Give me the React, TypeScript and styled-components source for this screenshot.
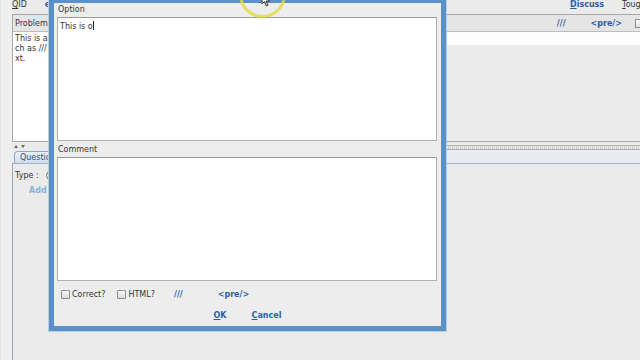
import styled, { createGlobalStyle } from "styled-components";

const GlobalStyle = createGlobalStyle`
  html, body {
    margin: 0;
    padding: 0;
    background: #ebebeb;
  }
  body {
    font-family: "DejaVu Sans", "Liberation Sans", sans-serif;
    font-size: 8px;
    color: #363636;
  }
`;

const Screen = styled.div`
  position: relative;
  width: 640px;
  height: 360px;
  overflow: hidden;
  background: #efefef;
  display: flex;
`;

const LeftGutter = styled.div`
  width: 12px;
  flex-shrink: 0;
  border-left: 1px solid #e2e2e2;
  box-sizing: border-box;
`;

const MainArea = styled.div`
  flex: 1;
  display: flex;
  flex-direction: column;
  background: #ebebeb;
  min-width: 0;
`;

const TopBar = styled.div`
  height: 14px;
  display: flex;
  align-items: flex-start;
  line-height: 9px;
`;

const TopLabel = styled.span<{ $ml?: number }>`
  margin-left: ${(p) => p.$ml ?? 0}px;
  color: #363636;
  white-space: nowrap;
`;

const TopLink = styled.span<{ $ml?: number }>`
  margin-left: ${(p) => p.$ml ?? 0}px;
  color: #2d5fa6;
  font-weight: bold;
  white-space: nowrap;
`;

const TopRight = styled.div`
  margin-left: auto;
  width: 70px;
  display: flex;
  overflow: hidden;
`;

const Mnemonic = styled.span`
  text-decoration: underline;
`;

const Spacer = styled.div`
  flex: 1;
`;

const ProblemPanel = styled.div`
  height: 128px;
  margin-right: -4px;
  box-sizing: border-box;
  border: 1px solid #a8a8a8;
  border-right: none;
  display: flex;
  flex-direction: column;
`;

const PanelHeader = styled.div`
  height: 17px;
  box-sizing: border-box;
  background: #e5e5e5;
  border-bottom: 1px solid #bdbdbd;
  display: flex;
  align-items: center;
  padding-left: 2px;
  white-space: nowrap;
`;

const HeaderTitle = styled.span`
  color: #363636;
`;

const HeaderCheck = styled.span`
  display: inline-block;
  width: 7px;
  height: 7px;
  margin-left: 13px;
  border: 1px solid #8e8e8e;
  background: linear-gradient(#fbfbfb, #dedede);
  flex-shrink: 0;
`;

const PanelBody = styled.div`
  flex: 1;
  display: flex;
`;

const SourceText = styled.div`
  width: 300px;
  background: #ffffff;
  padding: 2px 2px 0;
  line-height: 10px;
  color: #333;
`;

const PreviewSide = styled.div`
  flex: 1;
  display: flex;
  flex-direction: column;
`;

const PreviewStrip = styled.div`
  height: 13px;
  background: #fdfdfd;
`;

const Splitter = styled.div`
  height: 8px;
  display: flex;
  align-items: center;
  gap: 3px;
  padding-left: 2px;
`;

const SplitArrow = styled.span<{ $down?: boolean }>`
  width: 0;
  height: 0;
  border-left: 2px solid transparent;
  border-right: 2px solid transparent;
  ${(p) =>
    p.$down
      ? "border-top: 3px solid #666;"
      : "border-bottom: 3px solid #666;"}
`;

const SplitGrip = styled.div`
  flex: 1;
  height: 3px;
  margin-left: 20px;
  margin-top: 2px;
  border-top: 1px solid #b4b4b4;
  border-bottom: 1px solid #a9a9a9;
  background: repeating-linear-gradient(90deg, #cfcfcf 0 1px, #ececec 1px 2px);
`;

const TabStrip = styled.div`
  height: 13px;
  display: flex;
  align-items: flex-end;
  padding-left: 2px;
  background: #e9ecf0;
`;

const Tab = styled.div`
  height: 12px;
  box-sizing: border-box;
  padding: 0 5px;
  line-height: 11px;
  border: 1px solid #8fa8c8;
  border-bottom: none;
  border-radius: 4px 0 0 0;
  background: linear-gradient(#eef3fa, #cddcef);
  color: #33506f;
`;

const TabContent = styled.div`
  flex: 1;
  border-top: 1px solid #9fb1c8;
  border-left: 1px solid #9aa6b4;
  padding: 4px 2px;
`;

const TypeRow = styled.div`
  height: 14px;
  display: flex;
  align-items: center;
  gap: 7px;
`;

const Radio = styled.span`
  width: 7px;
  height: 7px;
  border-radius: 50%;
  border: 1px solid #6a6a6a;
  background: radial-gradient(circle, #222 0 1.6px, #f5f5f5 2px);
`;

const AddLink = styled.div`
  margin-top: 4px;
  padding-left: 14px;
  color: #8cb0d8;
  font-weight: bold;
`;

const Dialog = styled.div`
  position: absolute;
  left: 49px;
  top: -2px;
  width: 397px;
  height: 333px;
  box-sizing: border-box;
  border: 5px solid #5c90c8;
  box-shadow: 0 0 0 1px #b9cde3;
  background: #ededed;
  display: flex;
  flex-direction: column;
`;

const DialogLabel = styled.div<{ $h: number; $lh: number }>`
  height: ${(p) => p.$h}px;
  line-height: ${(p) => p.$lh}px;
  padding-left: 4px;
  color: #363636;
`;

const TextBox = styled.div`
  height: 124px;
  box-sizing: border-box;
  margin: 1px 4px 0 3px;
  background: #ffffff;
  border: 1px solid #b0b0b0;
  border-top-color: #9a9a9a;
  padding: 3px 2px;
  line-height: 10px;
  color: #333;
`;

const Caret = styled.span`
  display: inline-block;
  width: 1px;
  height: 9px;
  background: #222;
  vertical-align: -1px;
`;

const OptionsRow = styled.div`
  margin-top: 5px;
  height: 16px;
  display: flex;
  align-items: center;
  padding-left: 7px;
  white-space: nowrap;
`;

const CheckItem = styled.label<{ $ml?: number }>`
  display: flex;
  align-items: center;
  gap: 2px;
  margin-left: ${(p) => p.$ml ?? 0}px;
  color: #363636;
`;

const CheckBox = styled.span`
  width: 7px;
  height: 7px;
  border: 1px solid #8e8e8e;
  border-radius: 1px;
  background: linear-gradient(#fbfbfb, #d9d9d9);
`;

const ToolLink = styled.span<{ $ml?: number }>`
  margin-left: ${(p) => p.$ml ?? 0}px;
  color: #2d5fa6;
  font-weight: bold;
`;

const ButtonRow = styled.div`
  margin-top: 6px;
  height: 14px;
  display: flex;
  align-items: center;
  justify-content: center;
  gap: 25px;
`;

const LinkButton = styled.span`
  color: #2d5fa6;
  font-weight: bold;
`;

const Highlight = styled.div`
  position: absolute;
  left: 239px;
  top: -29px;
  width: 41px;
  height: 41px;
  border-radius: 50%;
  border: 3px solid rgba(228, 218, 58, 0.8);
  pointer-events: none;
`;

const Pointer = styled.svg`
  position: absolute;
  left: 261px;
  top: -7px;
`;

export default function App() {
  return (
    <>
      <GlobalStyle />
      <Screen>
        <LeftGutter />
        <MainArea>
          <TopBar>
            <TopLabel>
              <Mnemonic>Q</Mnemonic>ID
            </TopLabel>
            <TopLink $ml={18}>eID</TopLink>
            <TopRight>
              <TopLink>
                <Mnemonic>D</Mnemonic>iscuss
              </TopLink>
              <TopLabel $ml={18}>
                <Mnemonic>T</Mnemonic>ough
              </TopLabel>
            </TopRight>
          </TopBar>

          <ProblemPanel>
            <PanelHeader>
              <HeaderTitle>Problem Statement</HeaderTitle>
              <Spacer />
              <ToolLink>///</ToolLink>
              <ToolLink $ml={25}>&lt;pre/&gt;</ToolLink>
              <HeaderCheck />
            </PanelHeader>
            <PanelBody>
              <SourceText>
                This is a
                <br />
                ch as ///
                <br />
                xt.
              </SourceText>
              <PreviewSide>
                <PreviewStrip />
              </PreviewSide>
            </PanelBody>
          </ProblemPanel>

          <Splitter>
            <SplitArrow />
            <SplitArrow $down />
            <SplitGrip />
          </Splitter>

          <TabStrip>
            <Tab>Question</Tab>
          </TabStrip>
          <TabContent>
            <TypeRow>
              <span>Type :</span>
              <Radio />
            </TypeRow>
            <AddLink>Add Option</AddLink>
          </TabContent>
        </MainArea>

        <Dialog>
          <DialogLabel $h={13} $lh={14}>
            Option
          </DialogLabel>
          <TextBox>
            This is o<Caret />
          </TextBox>
          <DialogLabel $h={15} $lh={17}>
            Comment
          </DialogLabel>
          <TextBox />
          <OptionsRow>
            <CheckItem>
              <CheckBox />
              Correct?
            </CheckItem>
            <CheckItem $ml={12}>
              <CheckBox />
              HTML?
            </CheckItem>
            <ToolLink $ml={19}>///</ToolLink>
            <ToolLink $ml={35}>&lt;pre/&gt;</ToolLink>
          </OptionsRow>
          <ButtonRow>
            <LinkButton>
              <Mnemonic>O</Mnemonic>K
            </LinkButton>
            <LinkButton>
              <Mnemonic>C</Mnemonic>ancel
            </LinkButton>
          </ButtonRow>
        </Dialog>

        <Highlight />
        <Pointer width="10" height="14" viewBox="0 0 10 14">
          <path
            d="M1 1 L1 11 L3.5 8.5 L5.5 13 L7 12.3 L5 8 L8.5 8 Z"
            fill="#fff"
            stroke="#222"
            strokeWidth="0.9"
          />
        </Pointer>
      </Screen>
    </>
  );
}
